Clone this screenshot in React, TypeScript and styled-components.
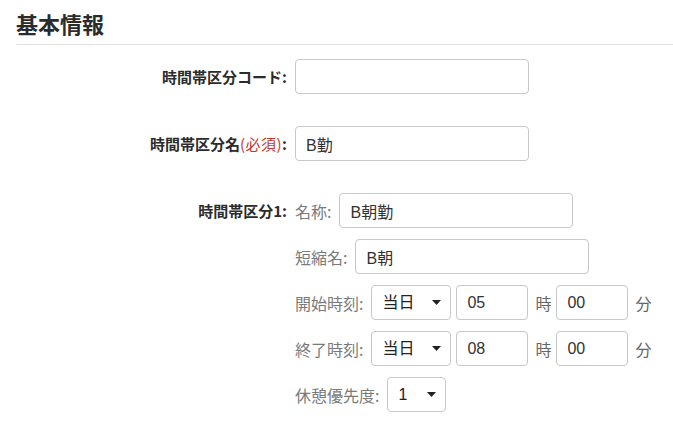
import * as React from "react"
import styled, { createGlobalStyle } from "styled-components"

const GlobalStyle = createGlobalStyle`
    html, body {
        margin: 0;
        padding: 0;
        background: #ffffff;
    }
    body {
        font-family: "Noto Sans CJK JP", "Noto Sans", sans-serif;
        color: #333333;
    }
`

const Page = styled.div`
    padding: 10px 0 0 16px;
    width: 657px;
`

const Heading = styled.h2`
    margin: 0;
    font-size: 22px;
    line-height: 26px;
    font-weight: 700;
    color: #2b2b2b;
    padding-bottom: 8px;
    border-bottom: 1px solid #e2e2e2;
`

const Form = styled.div`
    display: flex;
    flex-direction: column;
    gap: 32px;
    padding-top: 14px;
`

const Row = styled.div<{ $top?: boolean }>`
    display: flex;
    align-items: ${p => (p.$top ? "flex-start" : "center")};
    gap: 8px;
`

const Label = styled.div`
    width: 271px;
    flex: none;
    text-align: right;
    font-size: 15px;
    font-weight: 700;
    line-height: 35px;
    color: #2b2b2b;
    white-space: nowrap;
`

const Required = styled.span`
    color: #c0392b;
    font-weight: 400;
    letter-spacing: 0.5px;
`

const SubList = styled.div`
    display: flex;
    flex-direction: column;
    gap: 11px;
`

const SubRow = styled.div`
    display: flex;
    align-items: center;
    gap: 7px;
`

const TimeGroup = styled.div`
    display: flex;
    align-items: center;
    gap: 5px;
`

const SubLabel = styled.span`
    font-size: 16px;
    color: #7a7a7a;
    white-space: nowrap;
    margin-right: 1px;
`

const Unit = styled.span`
    font-size: 16px;
    color: #666666;
    margin-left: 2px;
`

const TextInput = styled.input<{ $w: number }>`
    box-sizing: border-box;
    width: ${p => p.$w}px;
    height: 35px;
    border: 1px solid #c8c8c8;
    border-radius: 4px;
    padding: 0 10px;
    font-family: "Liberation Sans", "Noto Sans CJK JP", sans-serif;
    font-size: 16px;
    color: #333333;
    background: #ffffff;
    outline: none;
`

const SelectWrap = styled.div<{ $w: number }>`
    position: relative;
    width: ${p => p.$w}px;
    height: 35px;
    flex: none;
`

const Select = styled.select`
    box-sizing: border-box;
    appearance: none;
    width: 100%;
    height: 100%;
    border: 1px solid #c8c8c8;
    border-radius: 4px;
    padding: 0 10px;
    font-family: "Liberation Sans", "Noto Sans CJK JP", sans-serif;
    font-size: 16px;
    color: #222222;
    background: #ffffff;
    outline: none;
`

const Caret = styled.svg`
    position: absolute;
    right: 10px;
    top: 15px;
    pointer-events: none;
`

function DropDown(props: { width: number; value: string; options: string[] }) {
    return (
        <SelectWrap $w={props.width}>
            <Select defaultValue={props.value}>
                {props.options.map(o => (
                    <option key={o} value={o}>
                        {o}
                    </option>
                ))}
            </Select>
            <Caret width="9" height="5" viewBox="0 0 9 5">
                <polygon points="0,0 9,0 4.5,5" fill="#222" />
            </Caret>
        </SelectWrap>
    )
}

const dayOptions = ["当日", "翌日"]

function TimeRow(props: { label: string; hour: string; minute: string }) {
    return (
        <SubRow>
            <SubLabel>{props.label}</SubLabel>
            <TimeGroup>
                <DropDown width={80} value="当日" options={dayOptions} />
                <TextInput $w={72} defaultValue={props.hour} />
                <Unit>時</Unit>
                <TextInput $w={72} defaultValue={props.minute} />
                <Unit>分</Unit>
            </TimeGroup>
        </SubRow>
    )
}

export default function App() {
    return (
        <Page>
            <GlobalStyle />
            <Heading>基本情報</Heading>
            <Form>
                <Row>
                    <Label>時間帯区分コード:</Label>
                    <TextInput $w={234} defaultValue="" />
                </Row>
                <Row>
                    <Label>
                        時間帯区分名<Required>(必須)</Required>:
                    </Label>
                    <TextInput $w={234} defaultValue="B勤" />
                </Row>
                <Row $top>
                    <Label>時間帯区分1:</Label>
                    <SubList>
                        <SubRow>
                            <SubLabel>名称:</SubLabel>
                            <TextInput $w={234} defaultValue="B朝勤" />
                        </SubRow>
                        <SubRow>
                            <SubLabel>短縮名:</SubLabel>
                            <TextInput $w={234} defaultValue="B朝" />
                        </SubRow>
                        <TimeRow label="開始時刻:" hour="05" minute="00" />
                        <TimeRow label="終了時刻:" hour="08" minute="00" />
                        <SubRow>
                            <SubLabel>休憩優先度:</SubLabel>
                            <DropDown width={59} value="1" options={["1", "2", "3"]} />
                        </SubRow>
                    </SubList>
                </Row>
            </Form>
        </Page>
    )
}
